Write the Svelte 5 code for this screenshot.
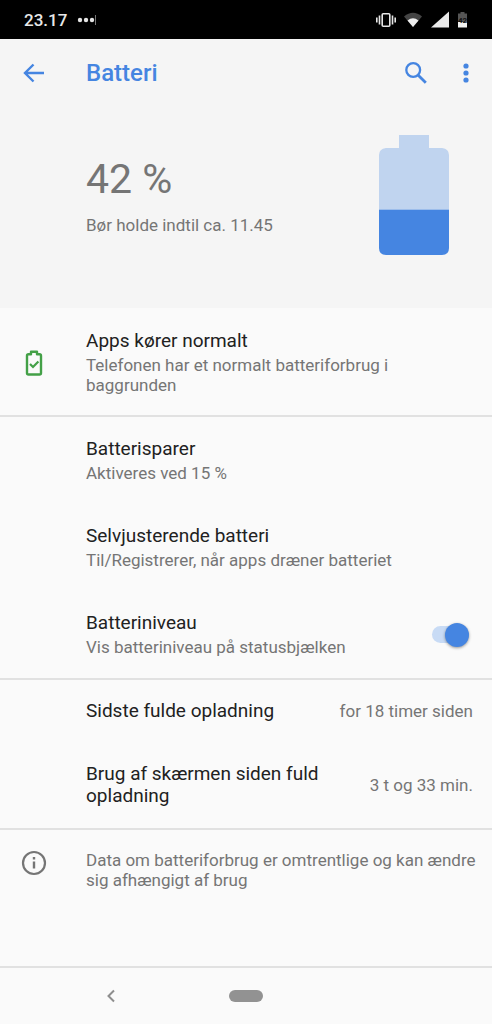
<script>
  let showLevel = $state(true);
  const level = 42;
</script>

<div class="screen">
  <div class="status">
    <span class="time">23.17</span>
    <svg class="dots" width="20" height="12" viewBox="0 0 20 12" fill="#e4e4e4" aria-hidden="true">
      <circle cx="3" cy="6" r="2.2" /><circle cx="9" cy="6" r="2.2" /><circle cx="15" cy="6" r="2.2" />
      <path d="M18 1h1v10h-1z" fill="#777" />
    </svg>
    <svg width="96" height="20" viewBox="0 0 96 20" aria-hidden="true">
      <g fill="none" stroke="#e6e6e6" stroke-width="1.6">
        <rect x="6.2" y="3.8" width="7.6" height="12.4" rx="1" />
        <path d="M3.500 5.500v9M.8 7.500v5M16.500 5.500v9M19.200 7.500v5" />
      </g>
      <path d="M28 6.500Q37-1 46 6.500L37 17z" fill="#444" />
      <path d="M31.500 10.500Q37 6 42.500 10.500L37 17z" fill="#eee" />
      <path d="M55 17.500L73 1.500v16z" fill="#eaeaea" />
      <path d="M82 3.500h2.500v-1.500h4v1.500H91v9h-9z" fill="#555" />
      <path d="M82 12h9v5.500h-9z" fill="#f1f1f1" />
      <text x="82" y="12.500" font-size="8" font-weight="700" fill="#111">{level}</text>
    </svg>
  </div>

  <header>
    <div class="toolbar">
      <button class="icon" aria-label="Tilbage">
        <svg width="22" height="20" viewBox="0 0 22 20" fill="none" stroke="#4585e1" stroke-width="2.400"><path d="M21 10H2.500M10.500 1.500L2 10l8.500 8.500" /></svg>
      </button>
      <h1>Batteri</h1>
      <button class="icon search" aria-label="Søg">
        <svg width="24" height="24" viewBox="0 0 24 24" fill="none" stroke="#4585e1"><circle cx="9.200" cy="9" r="6.900" stroke-width="2.300" /><path d="M14 14l7.800 7.800" stroke-width="2.800" /></svg>
      </button>
      <button class="icon more" aria-label="Flere valgmuligheder">
        <svg width="6" height="22" viewBox="0 0 6 22" fill="#4585e1"><circle cx="3" cy="4" r="2.600" /><circle cx="3" cy="11" r="2.600" /><circle cx="3" cy="18" r="2.600" /></svg>
      </button>
    </div>
    <div class="summary">
      <div>
        <p class="percent">{level} %</p>
        <p class="estimate">Bør holde indtil ca. 11.45</p>
      </div>
      <svg width="70" height="120" viewBox="0 0 70 120" aria-hidden="true">
        <path d="M20 0h30v13h13q7 1 7 7v54H0V20q0-6 7-7h13z" fill="#c0d4ef" />
        <path d="M0 74.500h70V113q0 7-7 7H7q-7 0-7-7z" fill="#4585e1" />
      </svg>
    </div>
  </header>

  <main>
    <section>
      <div class="row state">
        <div class="lead">
          <svg width="18" height="26" viewBox="0 0 18 26" fill="none" stroke="#43a047" aria-hidden="true"><path d="M6 1.800h6v2.500h2.500q1.500 0 1.500 1.500v17.200q0 1.500-1.500 1.500h-11Q2 24.500 2 23V5.800Q2 4.300 3.500 4.300H6z" stroke-width="2.400" stroke-linejoin="round" /><path d="M5 14l3 3 5.400-5.600" stroke-width="2.200" /></svg>
        </div>
        <div class="text">
          <h2>Apps kører normalt</h2>
          <p>Telefonen har et normalt batteriforbrug i baggrunden</p>
        </div>
      </div>
    </section>

    <section>
      <div class="row"><div class="text"><h2>Batterisparer</h2><p>Aktiveres ved 15 %</p></div></div>
      <div class="row"><div class="text"><h2>Selvjusterende batteri</h2><p>Til/Registrerer, når apps dræner batteriet</p></div></div>
      <label class="row">
        <span class="text"><span class="title">Batteriniveau</span><span class="sub">Vis batteriniveau på statusbjælken</span></span>
        <input class="switch" type="checkbox" role="switch" bind:checked={showLevel} />
      </label>
    </section>

    <section class="stats">
      <div class="row"><h2 class="text">Sidste fulde opladning</h2><p>for 18 timer siden</p></div>
      <div class="row"><h2 class="text">Brug af skærmen siden fuld opladning</h2><p>3 t og 33 min.</p></div>
    </section>

    <div class="row note">
      <div class="lead">
        <svg width="26" height="26" viewBox="0 0 26 26" aria-hidden="true"><circle cx="13" cy="13" r="11" fill="none" stroke="#757575" stroke-width="2.200" /><path d="M11.800 11.500h2.400v7h-2.400zM11.800 7h2.400v2.500h-2.400z" fill="#757575" /></svg>
      </div>
      <p class="text">Data om batteriforbrug er omtrentlige og kan ændre sig afhængigt af brug</p>
    </div>
  </main>

  <nav>
    <button class="icon" aria-label="Tilbage">
      <svg width="10" height="14" viewBox="0 0 10 14" fill="none" stroke="#8e8e8e" stroke-width="2"><path d="M8 1.500L2.500 7 8 12.500" /></svg>
    </button>
    <button class="home" aria-label="Startskærm"></button>
  </nav>
</div>

<style>
  :global(body) { background: #fafafa; }
  .screen {
    min-height: 100vh;
    display: flex;
    flex-direction: column;
    font-family: Roboto, sans-serif;
    font-size: 17px;
    line-height: 20px;
    color: #757575;
  }
  h1, h2, p { margin: 0; }
  button { border: 0; padding: 0; background: none; cursor: pointer; }
  svg { display: block; flex: none; }
  .status {
    display: flex;
    align-items: center;
    height: 39px;
    padding: 0 20px 0 24px;
    background: #000;
  }
  .time { color: #e8e8e8; font-weight: 500; }
  .dots { margin: 0 auto 0 10px; }
  header { background: #f5f5f5; padding-bottom: 53px; }
  .toolbar { display: flex; align-items: center; height: 68px; padding: 0 23px; }
  h1 { flex: 1; margin-left: 41px; color: #4585e1; font-size: 24px; line-height: 28px; font-weight: 500; }
  .more { margin-left: 35px; }
  .summary { display: flex; justify-content: space-between; align-items: center; padding: 28px 43px 0 86px; }
  .percent { font-size: 41px; line-height: 48px; margin-bottom: 12px; }
  main { flex: 1; }
  section { border-bottom: 2px solid #e1e1e1; }
  .row { display: flex; align-items: center; padding: 21px 19px 21px 0; }
  .state { padding-top: 22px; padding-bottom: 20px; }
  .lead { width: 67px; display: flex; justify-content: center; }
  .text { flex: 1; margin-left: 86px; }
  .lead + .text { margin-left: 19px; }
  h2, .title { display: block; margin-bottom: 3px; color: #212121; font-size: 19px; line-height: 22px; font-weight: 400; }
  .sub { display: block; }
  .stats .row { padding-top: 20px; }
  .stats h2 { margin-bottom: 0; }
  .stats p { margin-left: 48px; }
  .note { padding: 20px 0; align-items: flex-start; }
  .switch {
    appearance: none;
    display: flex;
    align-items: center;
    width: 37px;
    height: 17px;
    margin: 0 4px 0 0;
    border-radius: 9px;
    background: #c8dbf5;
  }
  .switch::before {
    content: "";
    flex: none;
    width: 24px;
    height: 24px;
    border-radius: 50%;
    background: #f1f1f1;
    box-shadow: 0 1px 3px #0006;
  }
  .switch:not(:checked) { background: #bbb; }
  .switch:checked::before { margin-left: auto; background: #4585e1; }
  nav {
    display: grid;
    grid-template-columns: 1fr 34px 1fr;
    align-items: center;
    height: 56px;
    border-top: 2px solid #e1e1e1;
  }
  nav .icon { justify-self: center; margin-right: 8px; }
  .home { width: 34px; height: 12px; border-radius: 6px; background: #929292; }
</style>
